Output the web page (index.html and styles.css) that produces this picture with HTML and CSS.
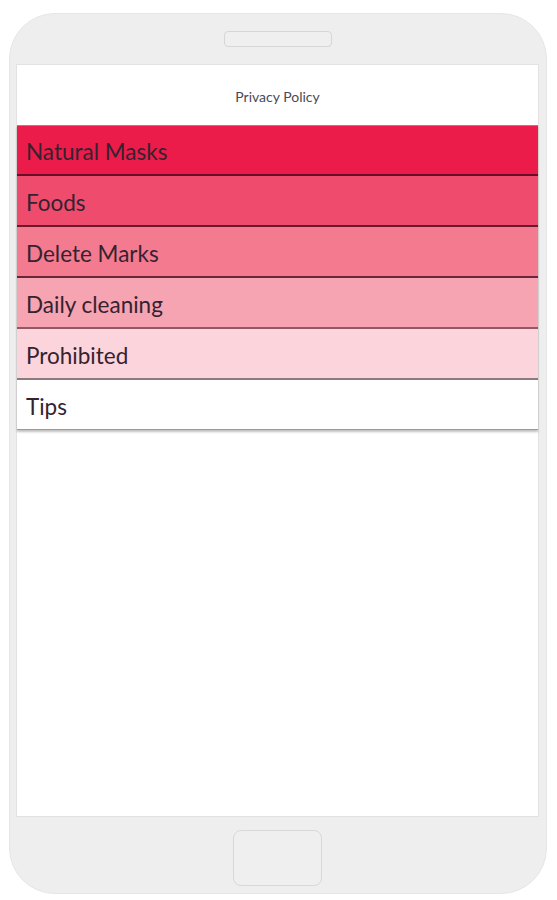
FILE: index.html
```html
<!DOCTYPE html>
<html>
<head>
<meta charset="utf-8">
<link rel="stylesheet" href="styles.css">
</head>
<body>
<div class="phone">
  <div class="phone-top"><div class="speaker"></div></div>
  <div class="screen">
    <div class="header">Privacy Policy</div>
    <div class="menu">
      <div class="row r1">Natural Masks</div>
      <div class="row r2">Foods</div>
      <div class="row r3">Delete Marks</div>
      <div class="row r4">Daily cleaning</div>
      <div class="row r5">Prohibited</div>
      <div class="row r6">Tips</div>
    </div>
  </div>
  <div class="phone-bottom"><div class="home"></div></div>
</div>
</body>
</html>
```
FILE: styles.css
```css
html, body {
  margin: 0;
  padding: 0;
  background: #ffffff;
}
body {
  font-family: Lato, "Open Sans", sans-serif;
}
.phone {
  box-sizing: border-box;
  margin: 13px 0 0 9px;
  width: 538px;
  height: 881px;
  border-radius: 46px;
  background: #eeeeee;
  border: 1px solid #e6e6e6;
  padding: 0 7px 0 6px;
  display: flex;
  flex-direction: column;
}
.phone-top {
  height: 50px;
  display: flex;
  justify-content: center;
  padding-top: 17px;
  box-sizing: border-box;
}
.speaker {
  width: 108px;
  height: 16px;
  box-sizing: border-box;
  border: 1px solid #d6d6d6;
  border-radius: 4px;
  background: #efefef;
}
.screen {
  height: 753px;
  background: #ffffff;
  border: 1px solid #e2e2e2;
  box-sizing: border-box;
}
.header {
  height: 60px;
  display: flex;
  align-items: center;
  justify-content: center;
  font-size: 14px;
  color: #4a4a55;
  padding-top: 2px;
  box-sizing: border-box;
}
.menu {
  box-shadow: 0 2px 2px rgba(0,0,0,0.25);
}
.row {
  height: 51px;
  box-sizing: border-box;
  border-bottom: 2px solid rgba(60, 10, 30, 0.75);
  padding: 3px 0 0 9px;
  display: flex;
  align-items: center;
  font-size: 22.5px;
  color: #35222f;
}
.r1 { background: #eb1c4a; border-top: 1px solid #f45a78; }
.r2 { background: #ef4c6d; }
.r3 { background: #f37a8f; }
.r4 { background: #f6a3b2; border-bottom-color: rgba(80, 40, 50, 0.6); }
.r5 { background: #fbd4dc; border-bottom-color: rgba(70, 60, 60, 0.6); }
.r6 { background: #ffffff; border-bottom: 1px solid #9a9a9a; height: 50px; }
.phone-bottom {
  flex: 1;
  display: flex;
  justify-content: center;
  padding-top: 13px;
  box-sizing: border-box;
}
.home {
  width: 89px;
  height: 56px;
  box-sizing: border-box;
  border: 1.5px solid #d8d8d8;
  border-radius: 8px;
  background: #efefef;
}
```
